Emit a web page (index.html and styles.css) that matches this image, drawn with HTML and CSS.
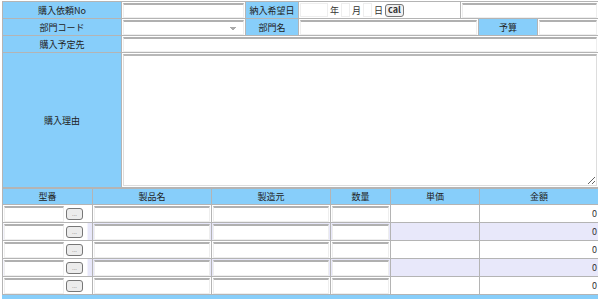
FILE: index.html
```html
<!DOCTYPE html>
<html lang="ja">
<head>
    <meta charset="UTF-8">
    <title>購入依頼</title>
    <link rel="stylesheet" href="styles.css">
</head>
<body>
<form action="#" method="post">
    <table class="head">
        <colgroup>
            <col style="width:119px">
            <col style="width:124px">
            <col style="width:53px">
            <col style="width:162px">
            <col style="width:18px">
            <col style="width:59px">
            <col style="width:61px">
        </colgroup>
        <tr>
            <th>購入依頼No</th>
            <td><input type="text" class="full"></td>
            <th>納入希望日</th>
            <td class="date">
                <input type="text" class="d4"><span>年</span><input type="text" class="d2"><span>月</span><input type="text" class="d2"><span>日</span><button type="button" class="cal">cal</button>
            </td>
            <td colspan="3"><input type="text" class="full"></td>
        </tr>
        <tr>
            <th>部門コード</th>
            <td><select class="full"><option></option></select></td>
            <th>部門名</th>
            <td colspan="2"><input type="text" class="full"></td>
            <th>予算</th>
            <td><input type="text" class="full"></td>
        </tr>
        <tr>
            <th>購入予定先</th>
            <td colspan="6"><input type="text" class="full"></td>
        </tr>
        <tr>
            <th>購入理由</th>
            <td colspan="6"><textarea class="reason"></textarea></td>
        </tr>
    </table>

    <table class="items">
        <colgroup>
            <col style="width:90px">
            <col style="width:119px">
            <col style="width:119px">
            <col style="width:60px">
            <col style="width:89px">
            <col style="width:119px">
        </colgroup>
        <tr>
            <th>型番</th>
            <th>製品名</th>
            <th>製造元</th>
            <th>数量</th>
            <th>単価</th>
            <th>金額</th>
        </tr>
        <tr>
            <td class="model"><input type="text" class="code"><button type="button" class="pick">...</button></td>
            <td><input type="text" class="full"></td>
            <td><input type="text" class="full"></td>
            <td><input type="text" class="full"></td>
            <td></td>
            <td class="num">0</td>
        </tr>
        <tr class="alt">
            <td class="model"><input type="text" class="code"><button type="button" class="pick">...</button></td>
            <td><input type="text" class="full"></td>
            <td><input type="text" class="full"></td>
            <td><input type="text" class="full"></td>
            <td></td>
            <td class="num">0</td>
        </tr>
        <tr>
            <td class="model"><input type="text" class="code"><button type="button" class="pick">...</button></td>
            <td><input type="text" class="full"></td>
            <td><input type="text" class="full"></td>
            <td><input type="text" class="full"></td>
            <td></td>
            <td class="num">0</td>
        </tr>
        <tr class="alt">
            <td class="model"><input type="text" class="code"><button type="button" class="pick">...</button></td>
            <td><input type="text" class="full"></td>
            <td><input type="text" class="full"></td>
            <td><input type="text" class="full"></td>
            <td></td>
            <td class="num">0</td>
        </tr>
        <tr>
            <td class="model"><input type="text" class="code"><button type="button" class="pick">...</button></td>
            <td><input type="text" class="full"></td>
            <td><input type="text" class="full"></td>
            <td><input type="text" class="full"></td>
            <td></td>
            <td class="num">0</td>
        </tr>
        <tr class="foot">
            <th colspan="6"></th>
        </tr>
    </table>
</form>
</body>
</html>
```
FILE: styles.css
```css
body {
    font-family: "Noto Sans CJK JP", "Liberation Sans", sans-serif;
    font-size: 9px;
    color: #222;
    margin: 1px 2px;
}

table {
    border-collapse: collapse;
    table-layout: fixed;
    width: 596px;
}

th, td {
    border: 1px solid #b4b4b4;
    padding: 0 1px;
    height: 16px;
    font-weight: normal;
}

th {
    background-color: #87cefa;
    text-align: center;
    color: #222;
}

td {
    background-color: #fff;
}

input, select, textarea, button {
    font-family: inherit;
    font-size: 9px;
    box-sizing: border-box;
    margin: 0;
}

.full {
    display: block;
    width: 100%;
    height: 15px;
    padding: 0 2px;
    border: 1px solid #eee;
    border-top: 2px solid #b0b0b0;
    background: #fff;
}

select.full {
    appearance: none;
    padding: 0;
    background:
        linear-gradient(45deg, transparent 50%, #aaa 50%) right 10px top 5px / 3px 3px no-repeat,
        linear-gradient(-45deg, transparent 50%, #aaa 50%) right 7px top 5px / 3px 3px no-repeat,
        #fff;
}

.date {
    white-space: nowrap;
}

.date span {
    margin: 0 2px;
    color: #333;
}

.d4, .d2 {
    height: 14px;
    border: 1px solid #eee;
    padding: 0;
    vertical-align: middle;
}

.d4 {
    width: 28px;
}

.d2 {
    width: 9px;
}

.date span, .cal {
    vertical-align: middle;
}

.cal {
    height: 13px;
    padding: 0 2px;
    line-height: 10px;
    border: 1px solid #777;
    border-radius: 3px;
    background: #f0f0f0;
    font-weight: bold;
    color: #333;
}

.reason {
    display: block;
    width: 100%;
    height: 132px;
    margin: 1px 0;
    border: 1px solid #ddd;
    border-top: 2px solid #b8b8b8;
    resize: both;
}

.items th {
    height: 15px;
}

.items td {
    height: 17px;
}

.items .full {
    height: 16px;
}

.model {
    text-align: right;
    white-space: nowrap;
}

.code {
    width: 60px;
    height: 16px;
    border: 1px solid #eee;
    border-top: 2px solid #b0b0b0;
    vertical-align: middle;
    float: left;
}

.pick {
    width: 17px;
    height: 12px;
    margin: 2px 8px 0 0;
    padding: 0;
    border: 1px solid #777;
    border-radius: 3px;
    background: #ececec;
    color: #888;
    font-size: 6px;
    line-height: 8px;
    vertical-align: middle;
}

.alt td {
    background-color: #e8e8fa;
}

.alt td.model {
    background: linear-gradient(to right, #fff 84px, #e8e8fa 84px);
}

.num {
    text-align: right;
    color: #333;
}

.foot th {
    height: 6px;
    border-color: #87cefa;
}
```
